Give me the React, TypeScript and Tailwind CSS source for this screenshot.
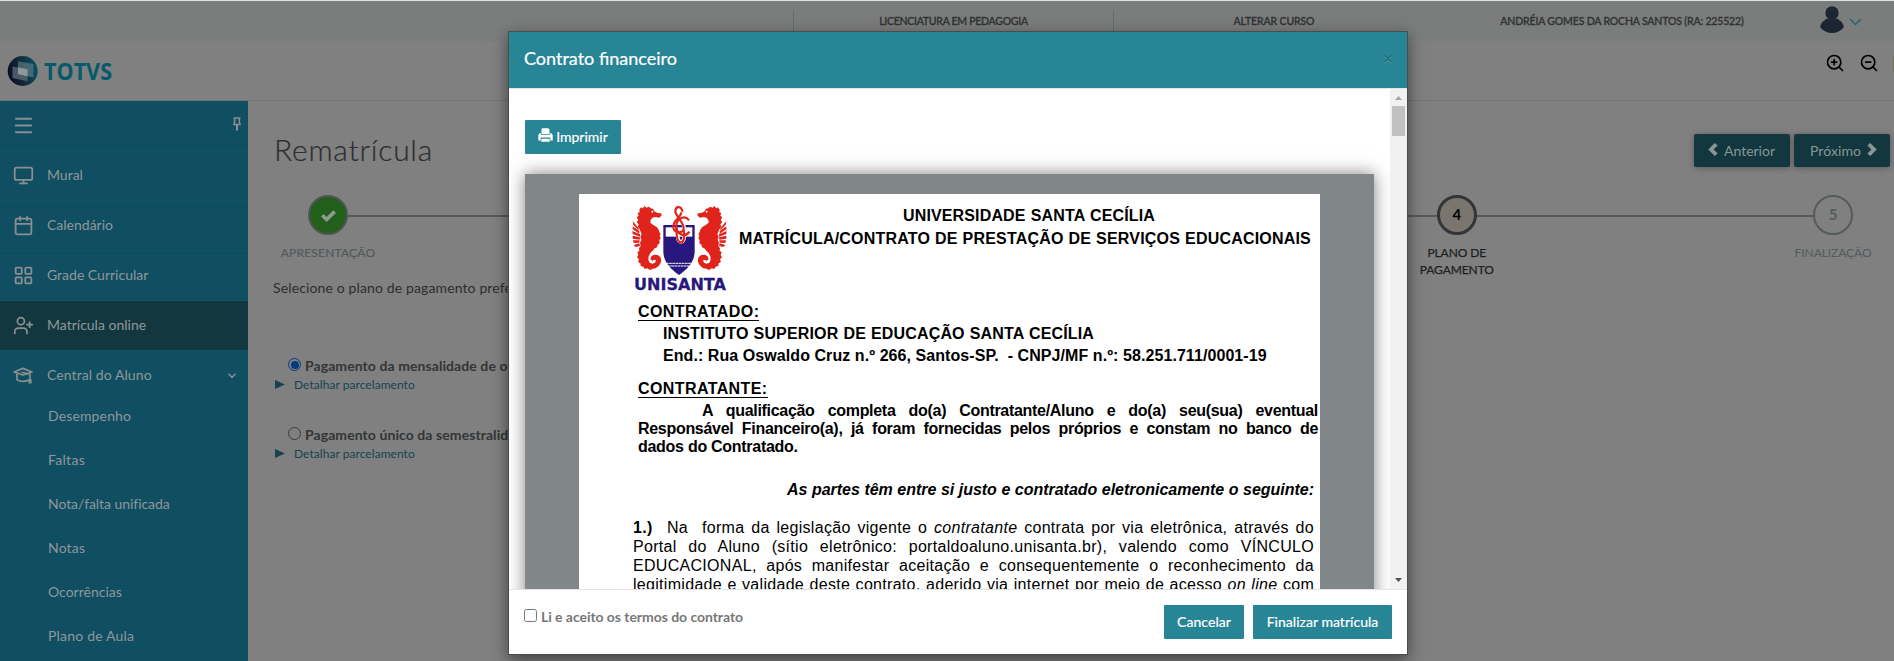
import type { ReactNode } from 'react'
import { Calendar, LayoutGrid, Menu, Monitor, UserPlus, ZoomIn, ZoomOut } from 'lucide-react'

const iconClass = '-mt-px size-[21px] text-[#8a8f91]'

function CapIcon() {
  return (
    <svg viewBox="0 0 20 18" className="h-[18px] w-5 text-[#8a8f91]" fill="none" stroke="currentColor" strokeWidth="1.7" strokeLinejoin="round">
      <path d="M1 5 10 1.4 19 5 10 8 1 5Z" />
      <path d="M4 6.5v6.3c3.2 2 8 2 12 .2" />
      <path d="M8.5 5.2 17 7.3v5" strokeWidth="1.5" />
      <path d="M16 12.5h2v3.5h-2z" fill="currentColor" strokeWidth="1.2" />
    </svg>
  )
}

function PinIcon() {
  return (
    <svg viewBox="0 0 8 14" className="h-[14px] w-2" fill="none" stroke="#8a8f91" strokeWidth="1.5">
      <path d="M.5.9h7M1.6 1v4.2L.9 7.6h6.2l-.7-2.4V1" />
      <path d="M4 7.6v5.9" strokeWidth="2" />
    </svg>
  )
}

function PrintIcon() {
  return (
    <svg viewBox="0 0 15 14" className="-mt-[2px] h-[14px] w-[15px]" fill="#fff">
      <path d="M4.2.2h6l1.3 1.4V6h-8V1z" />
      <path d="M2 5h.8v1.8h9.4V5h.9l1.6 2v5.4h-2.4V9.6H2.7v2.8H.3V7z" />
      <path d="M3.6 10.7h7.8l.5 3H3.1z" />
    </svg>
  )
}

function Chevron({ right }: { right?: boolean }) {
  return (
    <svg viewBox="0 0 10 13" className={right ? '-mt-px h-[13px] w-[10px] rotate-180' : '-mt-px h-[13px] w-[10px]'} fill="#8a9698">
      <path d="M6.8 0 9.6 2.6 5.6 6.5 9.6 10.4 6.8 13 .3 6.5z" />
    </svg>
  )
}

function TotvsLogo() {
  return (
    <svg viewBox="0 0 120 32" className="h-8 w-[120px] overflow-visible" role="img" aria-label="TOTVS">
      <defs>
        <linearGradient id="orb" x1="0" y1="0.6" x2="1" y2="0.4">
          <stop offset="0" stopColor="#0a0d22" />
          <stop offset="0.5" stopColor="#122c3b" />
          <stop offset="1" stopColor="#045367" />
        </linearGradient>
      </defs>
      <circle cx="15.7" cy="16" r="15" fill="url(#orb)" />
      <path d="M5.5 11.5 20.5 14.3v12L5.500 23Z" fill="#66717d" opacity=".7" />
      <path d="M11 6.2 26.500 9v13.500L11 19Z" fill="#6a838d" opacity=".6" />
      <path d="M11 12.500 20.500 14.300V21.300L11 19Z" fill="#8f9799" />
      <text x="37" y="24.500" fill="#055a6b" fontFamily="Open Sans, sans-serif" fontWeight="700" fontSize="23" textLength="68" lengthAdjust="spacingAndGlyphs">TOTVS</text>
    </svg>
  )
}

function Seahorse() {
  return (
    <g fill="#e0241b">
      <path d="M58 44 63 37 68 40 74 33 79 38 87 35 92 40 99 41 103 49 113 54 123 55 125 61 118 68 106 66 97 68 92 75 91 83 100 90 111 97 116 104 118 112 122 116 119 122 122 130 118 136 119 145 113 149 111 157 104 160 98 167 91 174 86 184 85 194 89 203 97 206 105 203 108 196 102 194 97 198 91 192 94 184 102 179 113 180 121 186 124 196 121 206 115 214 107 220 98 221 90 225 82 220 74 222 70 215 62 213 61 205 54 201 57 193 51 187 55 180 52 172 58 167 57 160 62 153 60 143 64 135 61 125 65 117 61 108 58 101 53 95 56 88 50 81 55 75 50 67 56 62 53 55 59 51Z" />
      <path d="M56 100 38 78 40 90 56 106ZM58 108 38 94 38 103 58 116ZM60 118 37 108 38 117 60 125ZM60 127 38 122 38 131 59 134ZM59 136 39 136 41 144 58 143ZM58 145 41 150 47 156 60 153Z" />
      <circle cx="97" cy="50" r="3" fill="#fff" />
    </g>
  )
}

function UnisantaLogo() {
  return (
    <svg viewBox="36 30 285 258" className="h-[86px] w-[95px] shrink-0 overflow-visible" role="img" aria-label="UNISANTA">
      <Seahorse />
      <g transform="translate(357 0) scale(-1 1)">
        <Seahorse />
      </g>
      <path d="M130 90h94v78c0 34-22 54-47 72-25-18-47-38-47-72z" fill="#28177c" />
      <path d="M137 97h80v28h-80z" fill="#fff" />
      <path d="M138 205h78M144 213h66" fill="none" stroke="#fff" strokeWidth="3" strokeDasharray="8 1.500" />
      <g fill="none" stroke="#fff" strokeWidth="11">
        <path d="M188 48c-4-14-19-14-21-1-2 16 25 28 25 52 0 14-24 13-25-2" />
        <ellipse cx="183" cy="123" rx="10" ry="18" />
      </g>
      <g fill="none" stroke="#e0241b" strokeWidth="6.500">
        <path d="M188 50c-4-18-21-18-22-2-1 14 25 32 25 52 0 16-28 16-31-2-3-22 22-28 24-46" />
        <path d="M207 76c-12-16-36-8-38 16-1 28 28 36 39 18" />
        <path d="M169 96c0 24 3 46 13 46 11 0 13-20 9-38" />
      </g>
      <text x="42" y="284" fill="#28177c" stroke="#28177c" strokeWidth="0.800" fontFamily="DejaVu Sans, Verdana, sans-serif" fontWeight="700" fontSize="46" textLength="276" lengthAdjust="spacingAndGlyphs">UNISANTA</text>
    </svg>
  )
}

const menu: { label: string; icon: ReactNode; active?: boolean }[] = [
  { label: 'Mural', icon: <Monitor className={iconClass} /> },
  { label: 'Calendário', icon: <Calendar className={iconClass} /> },
  { label: 'Grade Curricular', icon: <LayoutGrid className={iconClass} /> },
  { label: 'Matrícula online', icon: <UserPlus className={iconClass} />, active: true },
]

const submenu = [
  { label: 'Desempenho', cls: 'tracking-[0.14px]' },
  { label: 'Faltas', cls: 'tracking-[0.3px]' },
  { label: 'Nota/falta unificada', cls: 'tracking-[-0.06px]' },
  { label: 'Notas', cls: 'tracking-[0.17px]' },
  { label: 'Ocorrências', cls: '' },
  { label: 'Plano de Aula', cls: 'tracking-[0.2px]' },
]

function TopBar() {
  return (
    <div className="flex h-10 items-stretch bg-[#7b7d7c] pl-[793px] text-[10.5px] font-medium text-[#303233]">
      <div className="mt-[10px] flex w-80 shrink-0 justify-center border-l border-[#676a6a] pt-[3px] leading-[15px] tracking-[-0.27px] [-webkit-text-stroke:0.3px]">LICENCIATURA EM PEDAGOGIA</div>
      <div className="mt-[10px] flex w-[321px] shrink-0 justify-center border-l border-[#676a6a] pt-[3px] leading-[15px] tracking-[-0.12px] [-webkit-text-stroke:0.3px]">ALTERAR CURSO</div>
      <div className="mt-[10px] flex w-[376px] shrink-0 justify-center pt-[3px] leading-[15px] tracking-[-0.16px] [-webkit-text-stroke:0.3px]">ANDRÉIA GOMES DA ROCHA SANTOS (RA: 225522)</div>
      <div className="flex items-start pt-[5px] pl-[10px]">
        <svg viewBox="0 0 24 27" className="h-[27px] w-6" fill="#1b2632">
          <circle cx="12" cy="7" r="6.7" />
          <path d="M7.5 12.5h9C21 14.5 24 18 23.7 21.5 21 25 16.500 27 12 27S3 25 .3 21.500C0 18 3 14.500 7.500 12.500Z" />
        </svg>
        <svg viewBox="0 0 13 8" className="mt-[12px] ml-[5px] h-2 w-[13px]" fill="none" stroke="#1d6577" strokeWidth="1.5">
          <path d="m1 1 5.500 5.500L12 1" />
        </svg>
      </div>
    </div>
  )
}

function Header() {
  return (
    <div className="flex h-[60px] items-start justify-between border-b border-[#747474] pl-[7px]">
      <div className="pt-[14px]"><TotvsLogo /></div>
      <div className="flex pt-[11px] text-black">
        <ZoomIn className="mt-px size-5" />
        <ZoomOut className="mt-px ml-[14px] size-5" />
        <div className="mt-[4px] ml-[14px] h-4 w-px bg-[#7d7240]" />
      </div>
    </div>
  )
}

function Sidebar() {
  return (
    <nav className="w-[248px] shrink-0 overflow-hidden bg-[#104e61] text-[14px] text-[#8f979a]">
      <div className="flex h-[50px] items-start justify-between border-b border-[#0d5663] pr-[7px] pl-[12px]">
        <Menu className="mt-[13px] size-[23px] text-[#8a8f91]" strokeWidth={2} />
        <div className="pt-4"><PinIcon /></div>
      </div>
      {menu.map((m) => (
        <div key={m.label} className={m.active ? 'flex h-[50px] items-center border-b border-[#0d5663] bg-[#12373e] pl-[13px]' : 'flex h-[50px] items-center border-b border-[#0d5663] pl-[13px]'}>
          {m.icon}
          <span className="-mt-[3px] ml-[13px]">{m.label}</span>
        </div>
      ))}
      <div className="flex h-[43px] items-center pt-[6px] pr-3 pl-[13px]">
        <CapIcon />
        <span className="-mt-[3px] ml-[14px] tracking-[0.08px]">Central do Aluno</span>
        <svg viewBox="0 0 8 6" className="ml-auto h-[6px] w-2" fill="none" stroke="#8a8f91" strokeWidth="1.400">
          <path d="m.5.8 3.500 3.700L7.500.8" />
        </svg>
      </div>
      {submenu.map((s) => (
        <div key={s.label} className="flex h-11 items-center pb-[2px] pl-12"><span className={s.cls}>{s.label}</span></div>
      ))}
    </nav>
  )
}

function PaymentOption({ checked, children }: { checked?: boolean; children: ReactNode }) {
  return (
    <div className="h-[69px] pl-[2px]">
      <div className="flex items-start pl-[13px] text-[14px] leading-5 font-bold whitespace-nowrap text-[#333536]">
        <span className={checked ? 'mt-[2px] flex size-[13px] shrink-0 items-center justify-center rounded-full border-[1.500px] border-[#063a80]' : 'mt-[2px] flex size-[13px] shrink-0 rounded-full border border-[#3a3a3a]'}>
          {checked && <span className="size-[8px] rounded-full bg-[#063a80]" />}
        </span>
        <span className="ml-[4px] tracking-[0.08px]">{children}</span>
      </div>
      <div className="flex items-center text-[12px] leading-[17px] text-[#174350]">
        <svg viewBox="0 0 10 9" className="mb-px h-[9px] w-[10px]" fill="#174350"><path d="M0 0 10 4.500 0 9z" /></svg>
        <span className="ml-[9px] tracking-[0.05px]">Detalhar parcelamento</span>
      </div>
    </div>
  )
}

function Stepper() {
  return (
    <div className="relative flex items-start justify-between text-center text-[12px] leading-[17px]">
      <div className="absolute top-[20px] right-[55px] left-[55px] h-[2px] bg-[#535b5d]" />
      <div className="relative flex w-[110px] flex-col items-center text-[#535b5d]">
        <div className="flex size-10 items-center justify-center rounded-full border-2 border-[#4d5659] bg-[#226019]">
          <svg viewBox="0 0 15 12" className="mt-[2px] h-3 w-[15px]" fill="#8f9890"><path d="M0 6.500 2.600 4 5.600 7 12.300.3 15 2.900 5.600 12z" /></svg>
        </div>
        <div className="mt-[9px] tracking-[0.2px] [-webkit-text-stroke:0.2px]">APRESENTAÇÃO</div>
      </div>
      <div className="w-[110px]" />
      <div className="w-[110px]" />
      <div className="relative flex w-[110px] flex-col items-center text-[#1d1f20]">
        <div className="flex size-10 items-center justify-center rounded-full border-[3px] border-[#333536] bg-[#7a766f] pb-px text-[15px] font-bold text-black">4</div>
        <div className="mt-[9px] w-20 tracking-[-0.1px] [-webkit-text-stroke:0.25px]">PLANO DE PAGAMENTO</div>
      </div>
      <div className="relative flex w-[110px] flex-col items-center text-[#535b5d]">
        <div className="flex size-10 items-center justify-center rounded-full border-2 border-[#535b5d] bg-[#808080] pb-px text-[15px] font-bold">5</div>
        <div className="mt-[9px] tracking-[-0.06px]">FINALIZAÇÃO</div>
      </div>
    </div>
  )
}

function Main() {
  const btn = 'flex h-[33px] w-24 items-center justify-center rounded-[2px] bg-[#12373e] pb-px text-[14px] text-[#8a9698] shadow-[0_1px_6px_rgba(0,0,0,0.3)]'
  return (
    <main className="min-w-0 flex-1 pr-1 pl-[25px]">
      <div className="flex items-start justify-between pt-[30px]">
        <h1 className="pl-px text-[30px] leading-[36px] font-light tracking-[0.750px] text-[#2c2e2f] [-webkit-text-stroke:0.2px]">Rematrícula</h1>
        <div className="flex gap-1 pt-[3px]">
          <div className={btn}><Chevron /><span className="mr-px ml-[6px]">Anterior</span></div>
          <div className={btn}><span className="mr-[6px] ml-[3px] tracking-[0.08px]">Próximo</span><Chevron right /></div>
        </div>
      </div>
      <div className="mt-[28px] mr-[2px] h-[83px]"><Stepper /></div>
      <p className="h-5 text-[14px] leading-5 whitespace-nowrap tracking-[0.13px] text-[#2b2e30]">Selecione o plano de pagamento prefe</p>
      <div className="mt-[58px]">
        <PaymentOption checked>Pagamento da mensalidade de o</PaymentOption>
        <PaymentOption>Pagamento único da semestralid</PaymentOption>
      </div>
    </main>
  )
}

const line = 'whitespace-nowrap text-justify [text-align-last:justify]'

function ContractPage() {
  return (
    <div className="ml-[54px] w-[741px] shrink-0 bg-white pt-[12px] font-['Liberation_Sans',Arial,sans-serif] text-[16px] leading-[18px] text-black">
      <div className="flex h-[90px] items-start pl-[53px] font-bold">
        <div className="-mt-px"><UnisantaLogo /></div>
        <div className="mt-px ml-[12px]">
          <div className={`ml-[164px] w-[252px] tracking-[0.14px] ${line}`}>UNIVERSIDADE SANTA CECÍLIA</div>
          <div className={`mt-[5px] w-[572px] tracking-[0.2px] ${line}`}>MATRÍCULA/CONTRATO DE PRESTAÇÃO DE SERVIÇOS EDUCACIONAIS</div>
        </div>
      </div>
      <div className="mt-[7px] pl-[59px] font-bold">
        <div><span className="inline-block h-[18px] border-b border-black tracking-[0.43px]">CONTRATADO:</span></div>
        <div className={`mt-[4px] ml-[25px] w-[431px] tracking-[0.15px] ${line}`}>INSTITUTO SUPERIOR DE EDUCAÇÃO SANTA CECÍLIA</div>
        <div className="mt-[4px] ml-[25px] whitespace-pre tracking-[0.07px]">End.: Rua Oswaldo Cruz n.º 266, Santos-SP.  - CNPJ/MF n.º: 58.251.711/0001-19</div>
        <div className="mt-[15px]"><span className="inline-block h-[18px] border-b border-black tracking-[0.4px]">CONTRATANTE:</span></div>
        <div className={`mt-[4px] ml-[64px] w-[616px] tracking-[-0.3px] ${line}`}>A qualificação completa do(a) Contratante/Aluno e do(a) seu(sua) eventual</div>
        <div className={`w-[680px] tracking-[-0.3px] ${line}`}>Responsável Financeiro(a), já foram fornecidas pelos próprios e constam no banco de</div>
        <div className="tracking-[-0.28px]">dados do Contratado.</div>
        <div className={`mt-[25px] ml-[149px] w-[527px] italic tracking-[-0.02px] ${line}`}>As partes têm entre si justo e contratado eletronicamente o seguinte:</div>
      </div>
      <div className="mt-[19px] ml-[54px] w-[681px] leading-[19px] tracking-[0.3px]">
        <div className="flex">
          <b className="w-[34px]">1.)</b>
          <span className="w-[35px]">Na</span>
          <span className={`flex-1 ${line}`}>forma da legislação vigente o <i>contratante</i> contrata por via eletrônica, através do</span>
        </div>
        <div className={line}>Portal do Aluno (sítio eletrônico: portaldoaluno.unisanta.br), valendo como VÍNCULO</div>
        <div className={line}>EDUCACIONAL, após manifestar aceitação e consequentemente o reconhecimento da</div>
        <div className={line}>legitimidade e validade deste contrato, aderido via internet por meio de acesso <i>on line</i> com</div>
      </div>
    </div>
  )
}

function ContractModal() {
  const btn = 'flex h-[34px] items-center justify-center rounded-[1px] bg-[#278596] pb-[2px] text-[14px] text-white [-webkit-text-stroke:0.2px]'
  return (
    <div className="absolute top-[31px] left-[508px] flex h-[624px] w-[900px] flex-col border border-[#4c4c4c] bg-white bg-clip-padding shadow-[0_5px_15px_rgba(0,0,0,0.5)]">
      <div className="flex h-[57px] shrink-0 items-start justify-between border-b border-[#e5e5e5] bg-[#278596] pr-[14px] pl-[15px]">
        <h2 className="pt-[14px] text-[18px] leading-6 text-white [-webkit-text-stroke:0.2px]">Contrato financeiro</h2>
        <svg viewBox="0 0 10 10" className="mt-[22px] size-[10px]" fill="none" strokeWidth="1.300">
          <path d="m1.500 2.500 7 6.500m0-6.500-7 6.500" stroke="#57a0ae" />
          <path d="m1.500 1.500 7 6.500m0-6.500-7 6.500" stroke="#1f6a78" />
        </svg>
      </div>
      <div className="flex h-[500px] shrink-0 overflow-hidden">
        <div className="flex-1 overflow-hidden pt-[31px] pl-4">
          <div className={`${btn} w-24`}><PrintIcon /><span className="ml-[3px]">Imprimir</span></div>
          <div className="mt-5 flex h-[440px] w-[849px] bg-[#818689] pt-5 shadow-[0_0_16px_rgba(0,0,0,0.5)]">
            <ContractPage />
          </div>
        </div>
        <div className="flex w-[17px] flex-col items-center bg-[#f1f1f1]">
          <svg viewBox="0 0 7 4" className="mt-[7px] h-1 w-[7px]" fill="#a3a3a3"><path d="M3.500 0 7 4H0z" /></svg>
          <div className="mt-[6px] h-[30px] w-[13px] bg-[#c1c1c1]" />
          <svg viewBox="0 0 7 4" className="mt-auto mb-[7px] h-1 w-[7px]" fill="#505050"><path d="M0 0h7L3.500 4z" /></svg>
        </div>
      </div>
      <div className="flex flex-1 items-start border-t border-[#e5e5e5] pt-[15px] pr-[15px] pl-[15px]">
        <span className="mt-[4px] size-[13px] rounded-[2.500px] border border-[#767676] bg-white" />
        <span className="mt-[2px] ml-1 text-[14px] leading-5 font-bold tracking-[-0.05px] text-[#777]">Li e aceito os termos do contrato</span>
        <div className="ml-auto flex gap-[9px]">
          <div className={`${btn} w-20 tracking-[0.08px]`}>Cancelar</div>
          <div className={`${btn} w-[139px] tracking-[0.04px]`}>Finalizar matrícula</div>
        </div>
      </div>
    </div>
  )
}

export default function App() {
  return (
    <div className="relative flex h-[661px] flex-col overflow-hidden bg-[#808080] font-['Lato','Noto_Sans',sans-serif]">
      <div className="h-px shrink-0 bg-[#dfe3e2]" />
      <TopBar />
      <Header />
      <div className="flex min-h-0 flex-1">
        <Sidebar />
        <Main />
      </div>
      <ContractModal />
    </div>
  )
}
